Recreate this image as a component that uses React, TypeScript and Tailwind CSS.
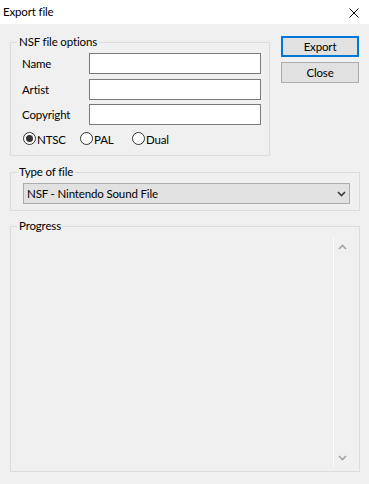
import React from 'react';

const font = { fontFamily: 'Lato, "Noto Sans", sans-serif' };

const Radio: React.FC<{ label: string; checked?: boolean; width: string }> = ({ label, checked, width }) => (
  <div className={`flex items-start ${width}`}>
    <span className="w-[13px] h-[13px] rounded-full border border-[#333333] bg-white flex items-center justify-center">
      {checked && <span className="w-[7px] h-[7px] rounded-full bg-[#333333]" />}
    </span>
    <span className="ml-[1px] leading-[16px]">{label}</span>
  </div>
);

const Field: React.FC<{ label: string; className?: string }> = ({ label, className = '' }) => (
  <div className={`flex items-center ${className}`}>
    <span className="w-[67px] leading-[16px]">{label}</span>
    <div className="w-[172px] h-[21px] bg-white border border-[#7a7a7a]" />
  </div>
);

const Chevron: React.FC<{ up?: boolean; className?: string }> = ({ up, className = '' }) => (
  <svg width="9" height="6" viewBox="0 0 9 6" className={className}>
    <polyline
      points={up ? '1,5 4.5,1.5 8,5' : '1,1 4.5,4.5 8,1'}
      fill="none"
      stroke="currentColor"
      strokeWidth="1.6"
    />
  </svg>
);

export default function App() {
  return (
    <div
      className="w-[369px] h-[484px] bg-[#f0f0f0] flex flex-col text-[11.5px] tracking-[-0.15px] text-black"
      style={font}
    >
      {/* Title bar */}
      <div className="h-[24px] bg-white flex items-center justify-between pl-[3px] pr-[10px]">
        <span className="leading-[16px]">Export file</span>
        <svg width="10" height="10" viewBox="0 0 10 10" className="mt-[1px]">
          <path d="M0.5 0.5 L9.5 9.5 M9.5 0.5 L0.5 9.5" stroke="#000" strokeWidth="1" />
        </svg>
      </div>

      <div className="flex-1 flex flex-col pl-[10px] pr-[9px]">
        {/* NSF options + buttons */}
        <div className="flex items-start mt-[10px]">
          <fieldset className="w-[260px] border border-[#dcdcdc]">
            <legend className="ml-[6px] px-[2px] leading-[16px]">NSF file options</legend>
            <div className="pl-[11px] pr-[8px] pt-[3px] pb-[7px] flex flex-col">
              <Field label="Name" />
              <Field label="Artist" className="mt-[5px]" />
              <Field label="Copyright" className="mt-[4px]" />
              <div className="flex mt-[7px] ml-[1px]">
                <Radio label="NTSC" checked width="w-[57px]" />
                <Radio label="PAL" width="w-[52px]" />
                <Radio label="Dual" width="w-[50px]" />
              </div>
            </div>
          </fieldset>

          <div className="ml-[11px] mt-[2px] flex flex-col gap-[5px]">
            <button className="w-[78px] h-[21px] bg-[#e1e1e1] border-2 border-[#0078d7] leading-[16px]">
              Export
            </button>
            <button className="w-[78px] h-[21px] bg-[#e1e1e1] border border-[#adadad] leading-[16px]">
              Close
            </button>
          </div>
        </div>

        {/* Type of file */}
        <fieldset className="mt-[8px] border border-[#dcdcdc]">
          <legend className="ml-[6px] px-[2px] leading-[16px]">Type of file</legend>
          <div className="pl-[12px] pr-[9px] pt-[3px] pb-[6px]">
            <div className="h-[21px] bg-[#e1e1e1] border border-[#adadad] flex items-center justify-between pl-[3px] pr-[3px]">
              <span className="leading-[16px]">NSF - Nintendo Sound File</span>
              <Chevron className="text-[#3c3c3c]" />
            </div>
          </div>
        </fieldset>

        {/* Progress */}
        <fieldset className="mt-[7px] border border-[#dcdcdc]">
          <legend className="ml-[6px] px-[2px] leading-[16px]">Progress</legend>
          <div className="pl-[6px] pr-[9px] pt-[4px] pb-[5px]">
            <div className="h-[228px] flex">
              <div className="flex-1" />
              <div className="w-[17px] border-l border-white flex flex-col justify-between items-center text-[#a3a3a3]">
                <div className="h-[17px] flex items-center justify-center">
                  <Chevron up />
                </div>
                <div className="h-[17px] flex items-center justify-center">
                  <Chevron />
                </div>
              </div>
            </div>
          </div>
        </fieldset>
      </div>
    </div>
  );
}
